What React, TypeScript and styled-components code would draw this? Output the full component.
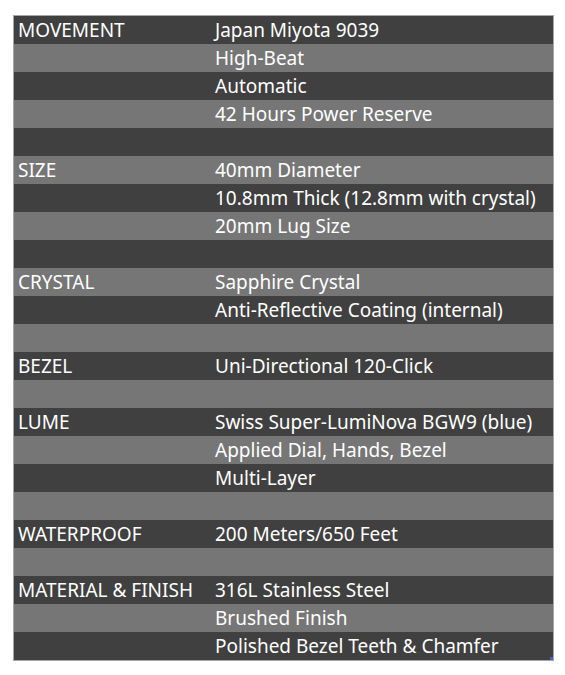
import React from 'react'
import styled, { createGlobalStyle } from 'styled-components'

const GlobalStyle = createGlobalStyle`
  html, body {
    margin: 0;
    padding: 0;
    background: #ffffff;
  }
`

type Row = [string, string]

const rows: Row[] = [
  ['MOVEMENT', 'Japan Miyota 9039'],
  ['', 'High-Beat'],
  ['', 'Automatic'],
  ['', '42 Hours Power Reserve'],
  ['', ''],
  ['SIZE', '40mm Diameter'],
  ['', '10.8mm Thick (12.8mm with crystal)'],
  ['', '20mm Lug Size'],
  ['', ''],
  ['CRYSTAL', 'Sapphire Crystal'],
  ['', 'Anti-Reflective Coating (internal)'],
  ['', ''],
  ['BEZEL', 'Uni-Directional 120-Click'],
  ['', ''],
  ['LUME', 'Swiss Super-LumiNova BGW9 (blue)'],
  ['', 'Applied Dial, Hands, Bezel'],
  ['', 'Multi-Layer'],
  ['', ''],
  ['WATERPROOF', '200 Meters/650 Feet'],
  ['', ''],
  ['MATERIAL & FINISH', '316L Stainless Steel'],
  ['', 'Brushed Finish'],
  ['', 'Polished Bezel Teeth & Chamfer'],
]

export default function App() {
  return (
    <Page>
      <GlobalStyle />
      <Table>
        {rows.map(([label, value], i) => (
          <SpecRow key={i} $dark={i % 2 === 0}>
            <Label>{label}</Label>
            <Value>{value}</Value>
          </SpecRow>
        ))}
        <Grip />
      </Table>
    </Page>
  )
}

const Page = styled.div`
  padding: 15px 0 0 13px;
`

const Table = styled.div`
  position: relative;
  width: 539px;
  border: 1px solid #a6a6a6;
  display: flex;
  flex-direction: column;
`

const SpecRow = styled.div<{ $dark: boolean }>`
  display: grid;
  grid-template-columns: 201px 1fr;
  height: 28px;
  align-items: center;
  background: ${(p) => (p.$dark ? '#404040' : '#767676')};
  color: #ffffff;
  font-family: 'Noto Sans', 'Open Sans', sans-serif;
  font-size: 19px;
  line-height: 28px;
`

const Label = styled.div`
  padding-left: 4px;
  white-space: nowrap;
`

const Value = styled.div`
  white-space: nowrap;
`

const Grip = styled.div`
  position: absolute;
  right: 0;
  bottom: 0;
  width: 3px;
  height: 3px;
  background: #4a5fc0;
`
